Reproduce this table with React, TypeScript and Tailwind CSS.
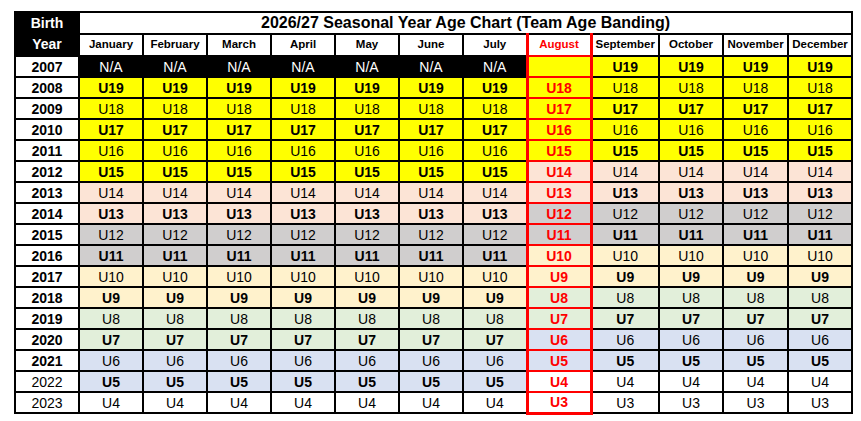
const months = [
  'January', 'February', 'March', 'April', 'May', 'June', 'July',
  'August', 'September', 'October', 'November', 'December',
];

const colWidths = ['w-[64px]', 'w-[64px]', 'w-[64px]', 'w-[64px]', 'w-[64px]', 'w-[64px]', 'w-[64px]', 'w-[64px]', 'w-[64px]', 'w-[68px]', 'w-[64px]', 'w-[65px]', 'w-[64px]'];

const years = Array.from({ length: 17 }, (_, i) => 2007 + i);

// background by age band
const bandBg = (n: number) => {
  if (n >= 15) return 'bg-[#ffff00]';
  if (n >= 13) return 'bg-[#fce4d6]';
  if (n >= 11) return 'bg-[#d0cece]';
  if (n >= 9) return 'bg-[#fff2cc]';
  if (n >= 7) return 'bg-[#e2efda]';
  if (n >= 5) return 'bg-[#d9e1f2]';
  return 'bg-white';
};

const isBold = (n: number) => n % 2 === 1 && n > 3;

const cellBase = 'border-2 border-black text-center p-0 text-[14px] leading-none';
const augBase = 'border-x-[3px] border-y-2 border-[#ff0000] text-center p-0 text-[14px] leading-none font-bold text-[#ff0000]';

const Row = ({ year, last }: { year: number; last: boolean }) => {
  const age = 2027 - year;
  const later = age - 1;
  return (
    <tr className="h-[21px]">
      <td className={`${cellBase} bg-white text-black ${year >= 2022 ? 'font-normal' : 'font-bold'}`}>{year}</td>
      {months.slice(0, 7).map((m) =>
        age > 19 ? (
          <td key={m} className={`${cellBase} bg-black text-white`}>N/A</td>
        ) : (
          <td key={m} className={`${cellBase} ${bandBg(age)} text-black ${isBold(age) ? 'font-bold' : 'font-normal'}`}>U{age}</td>
        )
      )}
      <td className={`${augBase} ${bandBg(later)} ${last ? 'border-b-[3px]' : ''}`}>{age > 19 ? '' : `U${later}`}</td>
      {months.slice(8).map((m) => (
        <td key={m} className={`${cellBase} ${bandBg(later)} text-black ${isBold(later) ? 'font-bold' : 'font-normal'}`}>U{later}</td>
      ))}
    </tr>
  );
};

export default function App() {
  return (
    <div className="min-h-screen bg-white pt-[11px] pl-[14px] font-['Liberation_Sans',Arial,sans-serif]">
      <table className="table-fixed border-collapse w-[838px]">
        <colgroup>
          {colWidths.map((w, i) => (
            <col key={i} className={w} />
          ))}
        </colgroup>
        <thead>
          <tr className="h-[21px]">
            <th rowSpan={2} className="border-2 border-black bg-black text-white text-[14px] leading-[21px] font-bold p-0">
              Birth
              <br />
              Year
            </th>
            <th colSpan={12} className="border-2 border-black bg-white text-black text-[16px] leading-none font-bold p-0">
              2026/27 Seasonal Year Age Chart (Team Age Banding)
            </th>
          </tr>
          <tr className="h-[21px]">
            {months.map((m) =>
              m === 'August' ? (
                <th key={m} className="border-x-[3px] border-b-2 border-t-2 border-[#ff0000] border-t-black bg-white text-[#ff0000] text-[11.5px] leading-none font-bold p-0">
                  {m}
                </th>
              ) : (
                <th key={m} className="border-2 border-black bg-white text-black text-[11.5px] leading-none font-bold p-0">
                  {m}
                </th>
              )
            )}
          </tr>
        </thead>
        <tbody>
          {years.map((y, i) => (
            <Row key={y} year={y} last={i === years.length - 1} />
          ))}
        </tbody>
      </table>
    </div>
  );
}
